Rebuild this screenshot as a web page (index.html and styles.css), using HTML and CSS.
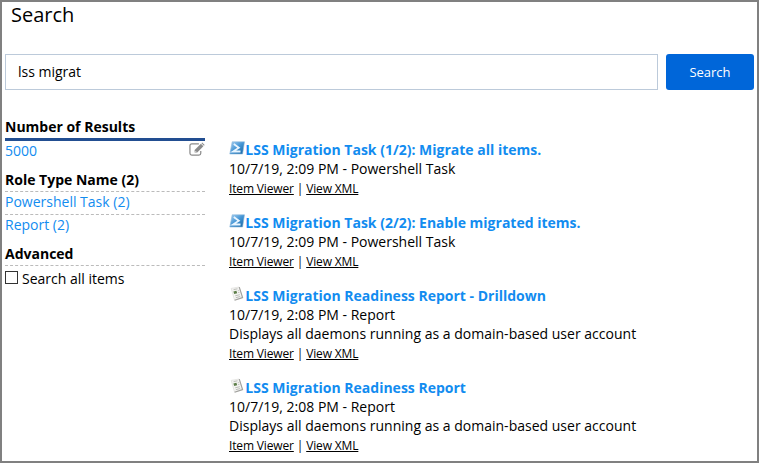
FILE: index.html
```
<!DOCTYPE html>
<html lang="en">
<head>
<meta charset="utf-8">
<title>Search</title>
<link rel="stylesheet" href="styles.css">
</head>
<body>
<svg class="defs" aria-hidden="true">
  <defs>
    <linearGradient id="blue" x1="0" y1="0" x2="1" y2="1">
      <stop offset="0" stop-color="#a9d2f3"/><stop offset=".5" stop-color="#4394d4"/><stop offset="1" stop-color="#17639f"/>
    </linearGradient>
    <symbol id="powershell" viewBox="0 0 16 16">
      <path d="M3.2 1.8H15.5L13.6 14H.8Z" fill="url(#blue)" stroke="#8fb9dc" stroke-width=".6"/>
      <path d="M4.8 4L9.8 7.7L4 11.5H11.5" fill="none" stroke="#e9f5ff" stroke-width="1.8"/>
    </symbol>
    <symbol id="report" viewBox="0 0 16 16">
      <path d="M2.2 2.4L10 1L13.5 11.5L5.5 14Z" fill="#f4f4f2" stroke="#dededb" stroke-width=".7"/>
      <path d="M10.3 1.2L13.6 11.6L5.6 14.2" fill="none" stroke="#a0a09d" stroke-width="1.1"/>
      <path d="M4.4 5.4L7.4 4.7L8.2 7.2L5.2 8Z" fill="#5c7d48"/>
      <path d="M4.6 3.6L8.5 2.8M8.8 4.8L9.8 4.6M9.2 6.6L10.4 6.3M6.2 9.8L10.8 8.7M6.8 11.7L11.2 10.5" stroke="#b5b7b1" stroke-width=".9"/>
    </symbol>
  </defs>
</svg>
<main class="page">
  <h1>Search</h1>
  <form class="search">
    <input class="query" type="text" value="lss migrat" aria-label="Search text">
    <button class="submit" type="button">Search</button>
  </form>
  <div class="columns">
    <aside class="filters">
      <h2 class="count-title">Number of Results</h2>
      <div class="count"><a>5000</a>
        <svg class="edit" viewBox="0 0 17 15" fill="none" stroke="#8b8b8b">
          <path d="M10.5 1.5H3Q1 1.5 1 3.5V11.5Q1 13.5 3 13.5H10.5Q12.5 13.5 12.5 11.5V9" stroke-width="1.3"/>
          <path d="M6 10.8V8L12.6 1.4L15.3 4.1L8.7 10.8Z" fill="#8b8b8b" stroke="none"/>
          <path d="M13.2 .8L14 0L16.7 2.7L15.9 3.5Z" fill="#8b8b8b" stroke="none"/>
          <path d="M7 9.2V9.9H7.8" stroke="#fff" stroke-width=".7"/>
        </svg>
      </div>
      <h2 class="role">Role Type Name (2)</h2>
      <a class="facet">Powershell Task (2)</a>
      <a class="facet">Report (2)</a>
      <h2 class="advanced">Advanced</h2>
      <label class="all"><input type="checkbox"><span>Search all items</span></label>
    </aside>
    <section class="results">
      <article>
        <h3><svg class="icon"><use href="#powershell"/></svg><a>LSS Migration Task (1/2): Migrate all items.</a></h3>
        <p>10/7/19, 2:09 PM - Powershell Task</p>
        <div class="links"><a>Item Viewer</a> | <a>View XML</a></div>
      </article>
      <article>
        <h3><svg class="icon"><use href="#powershell"/></svg><a>LSS Migration Task (2/2): Enable migrated items.</a></h3>
        <p>10/7/19, 2:09 PM - Powershell Task</p>
        <div class="links"><a>Item Viewer</a> | <a>View XML</a></div>
      </article>
      <article>
        <h3><svg class="icon"><use href="#report"/></svg><a>LSS Migration Readiness Report - Drilldown</a></h3>
        <p>10/7/19, 2:08 PM - Report</p>
        <p class="about">Displays all daemons running as a domain-based user account</p>
        <div class="links"><a>Item Viewer</a> | <a>View XML</a></div>
      </article>
      <article>
        <h3><svg class="icon"><use href="#report"/></svg><a>LSS Migration Readiness Report</a></h3>
        <p>10/7/19, 2:08 PM - Report</p>
        <p class="about">Displays all daemons running as a domain-based user account</p>
        <div class="links"><a>Item Viewer</a> | <a>View XML</a></div>
      </article>
    </section>
  </div>
</main>
</body>
</html>
```
FILE: styles.css
```
* { box-sizing: border-box; }
body { margin: 0; background: #fff; color: #000; font: 14px/19px "Open Sans", sans-serif; }
h1, h2, h3, p { margin: 0; }
.defs { display: block; width: 0; height: 0; }
.page { height: 463px; overflow: hidden; border: 2px solid #808080; padding: 0 3px; }
h1 { font-size: 20px; font-weight: 400; line-height: 25px; height: 52px; padding-left: 6px; }
.search { display: flex; gap: 8px; }
.query { width: 653px; height: 36px; padding: 0 12px 2px; border: 1px solid #bccada; background: #fff; color: #000; font: inherit; }
.submit { width: 88px; height: 36px; padding: 0; border: 0; border-radius: 3px; background: #0066d9; color: #fff; font: 13px "Open Sans", sans-serif; }
.columns { display: flex; gap: 24px; }
.filters { width: 200px; padding-top: 27px; }
h2 { font-size: 14px; font-weight: 700; line-height: 19px; }
.count-title { height: 24px; border-bottom: 3px solid #224e91; }
.count { display: flex; justify-content: space-between; height: 29px; color: #128cf0; }
.edit { width: 16px; height: 15px; margin-top: 1px; }
.role { height: 21px; }
.facet { display: block; height: 23px; border-top: 1px dashed #bbb; color: #128cf0; }
.advanced { height: 22px; margin-top: 7px; border-bottom: 1px dashed #bbb; }
.all { display: flex; gap: 4px; padding-top: 3px; }
.all input { appearance: none; width: 13px; height: 13px; margin: 2px 0 0; border: 1px solid #333; background: #fff; }
.results { padding-top: 50px; }
article { margin-bottom: 16px; }
h3 { display: flex; font-size: 14px; font-weight: 700; line-height: 19px; color: #128cf0; }
.icon { width: 16px; height: 16px; }
h3 a { padding-left: .3px; }
.about { letter-spacing: .01px; }
.links { height: 19px; font-size: 12px; line-height: 22px; letter-spacing: -.15px; white-space: pre; }
.links a { text-decoration: underline; }
```
